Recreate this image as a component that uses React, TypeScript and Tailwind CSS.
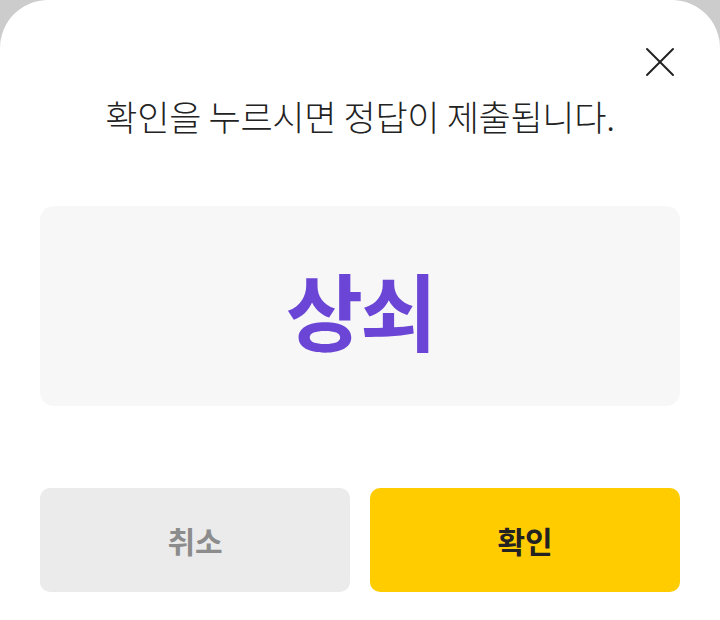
import { X } from "lucide-react";

const FONT = "font-['Noto_Sans_CJK_KR','Noto_Sans',sans-serif]";

export default function App() {
  return (
    <div className={`h-[620px] w-[720px] overflow-hidden bg-[#cccccc] ${FONT}`}>
      <div className="flex h-full flex-col rounded-t-[48px] bg-white px-10">
        <div className="-mr-[6px] flex justify-end pt-[36px]">
          <X className="size-[52px] text-[#222]" strokeWidth={0.9} />
        </div>

        <p className="mt-[5px] text-center text-[35px] font-light leading-[46px] tracking-[-0.3px] text-[#222]">
          확인을 누르시면 정답이 제출됩니다.
        </p>

        <div className="mt-[67px] flex h-[200px] items-center justify-center rounded-[14px] bg-[#f7f7f7]">
          <span className="pt-[6px] text-[84px] font-bold leading-none tracking-[-3px] text-[#6b46d6]">상쇠</span>
        </div>

        <div className="mt-[82px] grid grid-cols-2 gap-5">
          <button
            type="button"
            className="flex h-[104px] items-center justify-center rounded-[10px] bg-[#ebebeb] text-[30px] font-bold text-[#8c8c8c]"
          >
            취소
          </button>
          <button
            type="button"
            className="flex h-[104px] items-center justify-center rounded-[10px] bg-[#ffcc00] text-[30px] font-bold text-[#222]"
          >
            확인
          </button>
        </div>
      </div>
    </div>
  );
}
